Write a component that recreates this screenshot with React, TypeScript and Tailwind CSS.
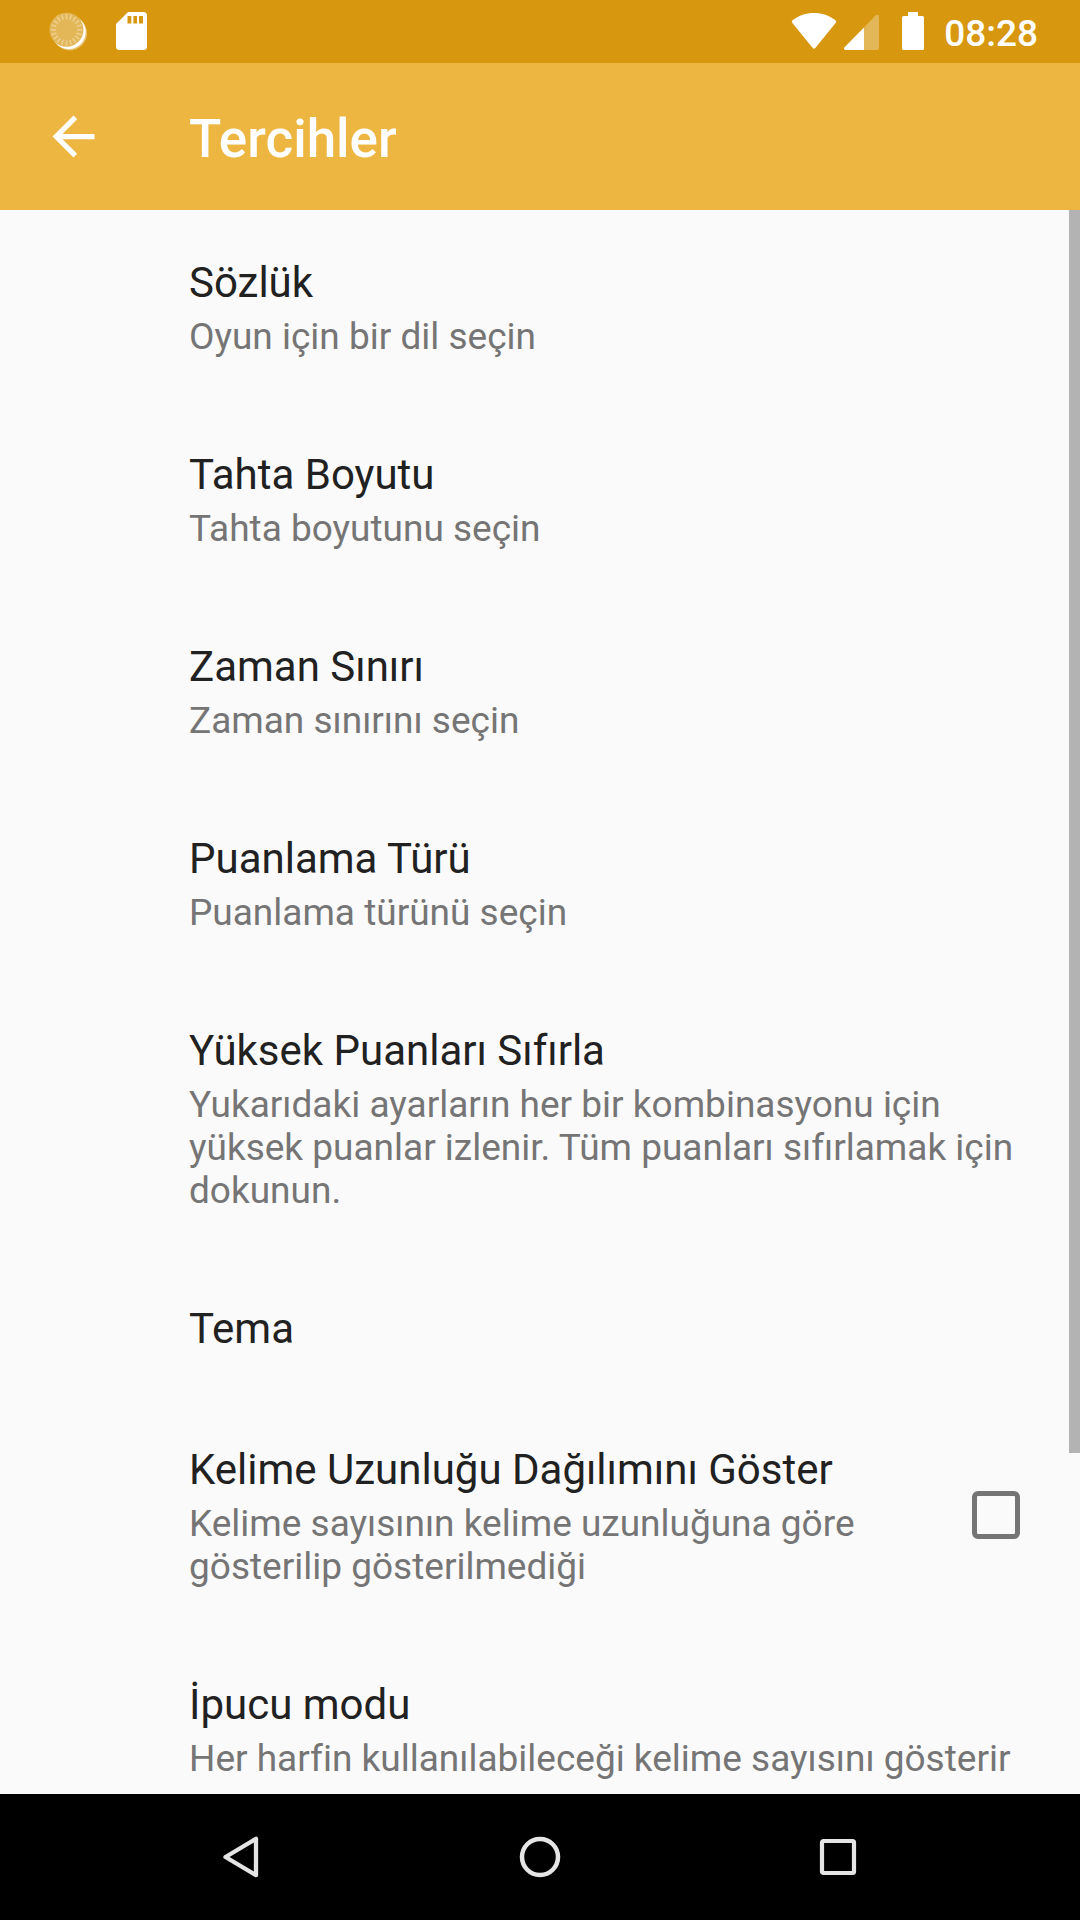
import React from "react";

type Preference = {
  id: string;
  title: string;
  summary?: string;
  checkbox?: boolean;
};

const preferences: Preference[] = [
  { id: "sozluk", title: "Sözlük", summary: "Oyun için bir dil seçin" },
  { id: "tahta", title: "Tahta Boyutu", summary: "Tahta boyutunu seçin" },
  { id: "zaman", title: "Zaman Sınırı", summary: "Zaman sınırını seçin" },
  { id: "puanlama", title: "Puanlama Türü", summary: "Puanlama türünü seçin" },
  {
    id: "sifirla",
    title: "Yüksek Puanları Sıfırla",
    summary:
      "Yukarıdaki ayarların her bir kombinasyonu için yüksek puanlar izlenir. Tüm puanları sıfırlamak için dokunun.",
  },
  { id: "tema", title: "Tema" },
  {
    id: "dagilim",
    title: "Kelime Uzunluğu Dağılımını Göster",
    summary: "Kelime sayısının kelime uzunluğuna göre gösterilip gösterilmediği",
    checkbox: true,
  },
  {
    id: "ipucu",
    title: "İpucu modu",
    summary: "Her harfin kullanılabileceği kelime sayısını gösterir",
  },
];

const ticks = Array.from({ length: 20 }, (_, i) => i * 18);

function SyncIcon() {
  return (
    <svg className="h-10 w-10" viewBox="0 0 40 40" aria-hidden="true">
      <circle cx="21.7" cy="22.2" r="17.2" fill="#e9c679" />
      <circle cx="20.7" cy="21" r="17" fill="#fff" />
      <circle cx="18.5" cy="18.800" r="17" fill="#e3b757" />
      <g stroke="#edcf8d" strokeWidth="1.6">
        {ticks.map((angle) => (
          <path key={angle} d="M18.5 3V8.300" transform={`rotate(${angle} 18.5 18.800)`} />
        ))}
      </g>
    </svg>
  );
}

function SdCardIcon() {
  return (
    <svg className="h-[38px] w-[31px]" viewBox="0 0 31 38" fill="#fff" aria-hidden="true">
      <path
        fillRule="evenodd"
        d="M12 0H27.5A3.5 3.5 0 0 1 31 3.500V34.500A3.500 3.500 0 0 1 27.500 38H3.500A3.500 3.500 0 0 1 0 34.500V12ZM11.500 4V11.500H15.300V4ZM17.400 4V11.500H21V4ZM23 4V11.500H27V4Z"
      />
    </svg>
  );
}

function StatusBar() {
  return (
    <div className="flex h-[63px] shrink-0 items-center justify-between bg-[#d7970f] pr-[42px] pb-px pl-12">
      <div className="flex items-center gap-7">
        <SyncIcon />
        <SdCardIcon />
      </div>
      <div className="flex items-center">
        <svg className="h-[38px] w-[46px]" viewBox="0 0 46 38" fill="#fff" aria-hidden="true">
          <path d="M1.200 10.800Q0 9.200 1.800 8C8 3.600 15 1 23 1S38 3.600 44.200 8Q46 9.200 44.800 10.800L24.300 36Q23 37.500 21.700 36Z" />
        </svg>
        <svg className="ml-[7px] h-[38px] w-[35px]" viewBox="0 0 35 38" fill="#fff" aria-hidden="true">
          <path
            d="M20 15.500L31.500 3.600Q35 1.200 35 5V36Q35 38 33 38H20Z"
            fill="#e3b757"
          />
          <path d="M20 15.500V38H1.500Q-1 37.500 0.500 35.300Z" />
        </svg>
        <svg className="ml-[23px] h-[38px] w-[22px]" viewBox="0 0 22 38" fill="#fff" aria-hidden="true">
          <path d="M6 0H16V4H20.500Q22 4 22 5.500V36.500Q22 38 20.500 38H1.500Q0 38 0 36.500V5.500Q0 4 1.500 4H6Z" />
        </svg>
        <span className="ml-5 pt-1 text-[37px] leading-[43px] font-medium text-white">08:28</span>
      </div>
    </div>
  );
}

function AppBar() {
  return (
    <header className="flex h-[147px] shrink-0 items-center gap-[84px] bg-[#edb641] pl-[42px]">
      <button type="button" aria-label="Geri" className="shrink-0">
        <svg className="h-[63px] w-[63px]" viewBox="0 0 24 24" fill="#fff" aria-hidden="true">
          <path d="M20 11H7.830l5.590-5.590L12 4l-8 8 8 8 1.410-1.410L7.830 13H20v-2z" />
        </svg>
      </button>
      <h1 className="pt-1 text-[53px] leading-[62px] font-medium text-white">Tercihler</h1>
    </header>
  );
}

function PreferenceText({ title, summary }: Preference) {
  return (
    <span className="block min-w-0 flex-1 pt-12 pb-11">
      <span className="block text-[42px] leading-[49px] text-[#212121]">{title}</span>
      {summary && (
        <span className="mt-2 block text-[37px] leading-[43px] text-[#757575]">{summary}</span>
      )}
    </span>
  );
}

function PreferenceRow(preference: Preference) {
  if (preference.checkbox) {
    return (
      <label
        htmlFor={preference.id}
        className="flex w-full items-center gap-[84px] pr-[60px] pl-[189px]"
      >
        <PreferenceText {...preference} />
        <input
          id={preference.id}
          type="checkbox"
          className="h-12 w-12 shrink-0 appearance-none rounded-md border-[5px] border-[#757575] checked:bg-[#edb641]"
        />
      </label>
    );
  }
  return (
    <button type="button" className="flex w-full pr-[60px] pl-[189px] text-left">
      <PreferenceText {...preference} />
    </button>
  );
}

function NavigationBar() {
  return (
    <nav className="grid h-[126px] shrink-0 grid-cols-3 bg-black px-[93px]">
      <button type="button" aria-label="Geri" className="flex items-center justify-center">
        <svg className="h-12 w-12" viewBox="0 0 48 48" fill="none" stroke="#e5e5e5" aria-hidden="true">
          <path d="M7.500 24L38 5.800V42.200Z" strokeWidth="4.300" strokeLinejoin="round" />
        </svg>
      </button>
      <button type="button" aria-label="Ana ekran" className="flex items-center justify-center">
        <svg className="h-12 w-12" viewBox="0 0 48 48" fill="none" stroke="#e5e5e5" aria-hidden="true">
          <circle cx="24" cy="24" r="18" strokeWidth="4.500" />
        </svg>
      </button>
      <button type="button" aria-label="Son uygulamalar" className="flex items-center justify-center">
        <svg className="h-12 w-12" viewBox="0 0 48 48" fill="none" stroke="#e5e5e5" aria-hidden="true">
          <rect x="8" y="8" width="32" height="32" rx="1.500" strokeWidth="4.200" />
        </svg>
      </button>
    </nav>
  );
}

export default function App() {
  return (
    <div className="flex h-screen flex-col bg-[#fafafa] font-['Roboto',sans-serif] [font-variant-ligatures:none]">
      <StatusBar />
      <AppBar />
      <main className="relative min-h-0 flex-1 overflow-hidden">
        <ul>
          {preferences.map((preference) => (
            <li key={preference.id}>
              <PreferenceRow {...preference} />
            </li>
          ))}
        </ul>
        <div className="absolute top-0 right-0 h-[78.5%] w-[11px] bg-[#b3b3b3]" />
      </main>
      <NavigationBar />
    </div>
  );
}
